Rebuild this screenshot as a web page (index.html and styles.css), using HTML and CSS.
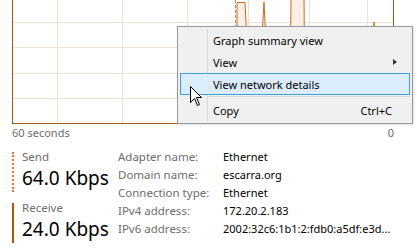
FILE: index.html
```html
<!DOCTYPE html>
<html lang="en">
<head>
    <meta charset="UTF-8">
    <meta name="viewport" content="width=device-width, initial-scale=1.0">
    <title>Ethernet - Performance</title>
    <link rel="stylesheet" href="styles.css">
</head>
<body>
    <div class="panel">
        <div class="graph">
            <svg class="graph-svg" width="380" height="123" viewBox="0 0 380 123">
                <!-- grid -->
                <g stroke="#efe0d2" stroke-width="1">
                    <line x1="0" y1="22.5" x2="380" y2="22.5"/>
                    <line x1="0" y1="47.5" x2="380" y2="47.5"/>
                    <line x1="0" y1="73.5" x2="380" y2="73.5"/>
                    <line x1="0" y1="98.5" x2="380" y2="98.5"/>
                    <line x1="44.5" y1="0" x2="44.5" y2="123"/>
                    <line x1="109.5" y1="0" x2="109.5" y2="123"/>
                    <line x1="174.5" y1="0" x2="174.5" y2="123"/>
                    <line x1="235.5" y1="0" x2="235.5" y2="123"/>
                    <line x1="296.5" y1="0" x2="296.5" y2="123"/>
                    <line x1="354.5" y1="0" x2="354.5" y2="123"/>
                </g>
                <!-- receive -->
                <polygon fill="#fcefe3" stroke="#c46a24" stroke-width="1"
                    points="224,123 224,2.5 232,2.5 238,123 244,123 251,2 257,123 277,123 278,-5 291,-5 292,123"/>
                <polyline fill="none" stroke="#c46a24" stroke-width="1" points="359,123 361,22 362,123"/>
                <!-- send -->
                <line x1="222.5" y1="0" x2="222.5" y2="123" stroke="#e8804a" stroke-width="1" stroke-dasharray="3 2"/>
            </svg>
        </div>

        <div class="axis">
            <span>60 seconds</span>
            <span>0</span>
        </div>

        <div class="stats">
            <div class="rates">
                <div class="rate rate-send">
                    <div class="rate-label">Send</div>
                    <div class="rate-value">64.0 Kbps</div>
                </div>
                <div class="rate rate-receive">
                    <div class="rate-label">Receive</div>
                    <div class="rate-value">24.0 Kbps</div>
                </div>
            </div>

            <div class="details">
                <span class="detail-label">Adapter name:</span>
                <span class="detail-value">Ethernet</span>
                <span class="detail-label">Domain name:</span>
                <span class="detail-value">escarra.org</span>
                <span class="detail-label">Connection type:</span>
                <span class="detail-value">Ethernet</span>
                <span class="detail-label">IPv4 address:</span>
                <span class="detail-value">172.20.2.183</span>
                <span class="detail-label">IPv6 address:</span>
                <span class="detail-value">2002:32c6:1b1:2:fdb0:a5df:e3d...</span>
            </div>
        </div>

        <div class="context-menu">
            <div class="menu-item">Graph summary view</div>
            <div class="menu-item has-sub">View<span class="sub-arrow"></span></div>
            <div class="menu-item active">View network details</div>
            <div class="menu-sep"></div>
            <div class="menu-item">Copy<span class="shortcut">Ctrl+C</span></div>
        </div>

        <svg class="cursor" width="13" height="21" viewBox="0 0 13 21">
            <path d="M0.5 0.5 L0.5 16.5 L4.5 12.5 L7.5 19.5 L9.5 18.5 L6.5 11.5 L11.5 11.5 Z"
                  fill="#fff" stroke="#000" stroke-width="1" stroke-linejoin="miter"/>
        </svg>
    </div>
</body>
</html>
```

FILE: styles.css
```css
* {
    margin: 0;
    padding: 0;
    box-sizing: border-box;
}

body {
    font-family: 'Noto Sans', sans-serif;
    font-size: 12px;
    background-color: white;
    color: #000;
}

.panel {
    position: relative;
    width: 417px;
    height: 249px;
    overflow: hidden;
}

.graph {
    margin-left: 12px;
    width: 382px;
    height: 124px;
    border-left: 1px solid #a65716;
    border-right: 1px solid #a65716;
    border-bottom: 1px solid #a65716;
}

.graph-svg {
    display: block;
}

.axis {
    display: flex;
    justify-content: space-between;
    padding: 1px 23px 0 12px;
    height: 18px;
    line-height: 16px;
    font-size: 11px;
    color: #6d6d6d;
}

.stats {
    display: flex;
    padding: 10px 0 0 12px;
}

.rates {
    width: 106px;
    display: flex;
    flex-direction: column;
    gap: 11px;
}

.rate {
    padding-left: 8px;
    height: 40px;
}

.rate-send {
    border-left: 2px dotted #e8733a;
}

.rate-receive {
    border-left: 2px solid #a65716;
}

.rate-label {
    color: #6d6d6d;
    font-size: 11.5px;
    line-height: 16px;
    margin-top: -3px;
}

.rate-value {
    font-size: 19px;
    line-height: 26px;
    white-space: nowrap;
}

.details {
    display: grid;
    grid-template-columns: 105px auto;
    grid-auto-rows: 17.9px;
    margin-top: -4px;
    line-height: 17.9px;
    white-space: nowrap;
}

.detail-label {
    color: #6d6d6d;
    font-size: 11.5px;
}

.detail-value {
    color: #000;
    font-size: 11px;
}

/* context menu */
.context-menu {
    position: absolute;
    left: 177px;
    top: 26px;
    width: 236px;
    padding: 2px;
    font-size: 11px;
    background: #f0f0f0;
    border: 1px solid #979797;
    box-shadow: 1px 1px 2px rgba(0, 0, 0, 0.12);
    background-image: linear-gradient(#d7d7d7, #d7d7d7);
    background-size: 1px calc(100% - 4px);
    background-position: 29px 2px;
    background-repeat: no-repeat;
}

.menu-item {
    position: relative;
    display: flex;
    align-items: center;
    height: 22px;
    padding-left: 32px;
    padding-right: 17px;
    border: 1px solid transparent;
}

.menu-item.active {
    background: #dbecfb;
    border-color: #3c9fdd;
}

.sub-arrow {
    margin-left: auto;
    margin-right: -5px;
    width: 0;
    height: 0;
    border-top: 3.5px solid transparent;
    border-bottom: 3.5px solid transparent;
    border-left: 4px solid #333;
}

.shortcut {
    margin-left: auto;
}

.menu-sep {
    height: 4px;
    margin-left: 28px;
    border-top: 1px solid transparent;
}

.menu-sep::after {
    content: "";
    display: block;
    height: 1px;
    background: #d7d7d7;
}

.cursor {
    position: absolute;
    left: 190px;
    top: 86px;
}
```
